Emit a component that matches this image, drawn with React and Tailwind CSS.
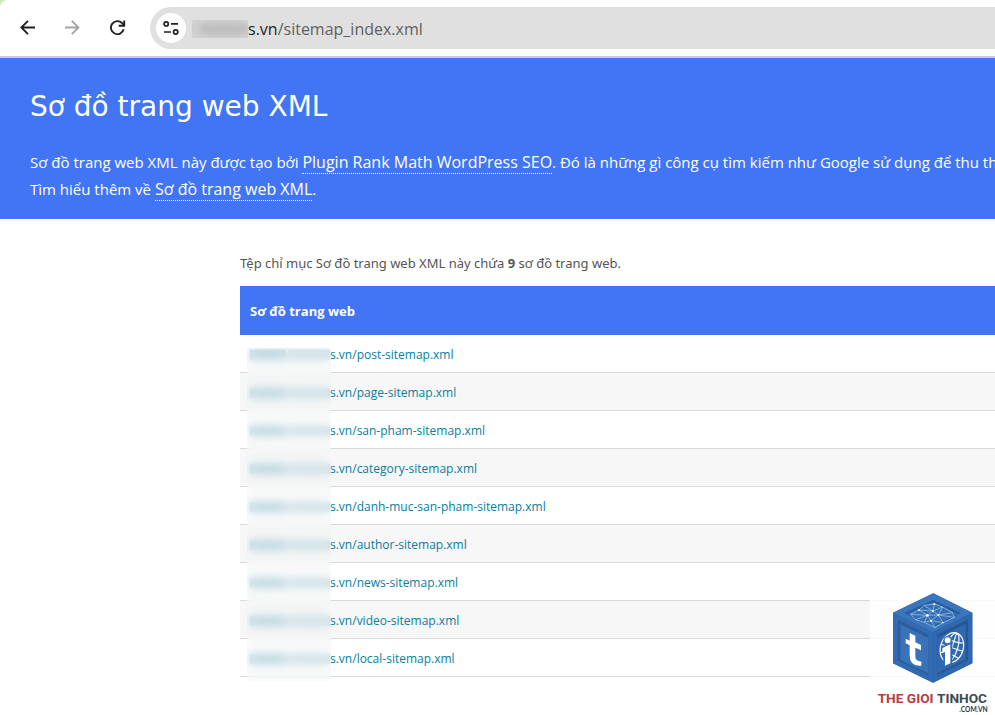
import React from 'react'

const sitemaps = [
  'post-sitemap.xml',
  'page-sitemap.xml',
  'san-pham-sitemap.xml',
  'category-sitemap.xml',
  'danh-muc-san-pham-sitemap.xml',
  'author-sitemap.xml',
  'news-sitemap.xml',
  'video-sitemap.xml',
  'local-sitemap.xml'
]

const BackIcon = () => (
  <svg width="16" height="16" viewBox="0 0 16 16" fill="none" stroke="currentColor" strokeWidth="1.8">
    <path d="M15 7.5H1.8M8 0.8L1.3 7.5l6.7 6.7" />
  </svg>
)

const ForwardIcon = () => (
  <svg width="16" height="16" viewBox="0 0 16 16" fill="none" stroke="currentColor" strokeWidth="1.8">
    <path d="M0 7.5h13.2M6.8 0.8L13.5 7.5l-6.7 6.7" />
  </svg>
)

const ReloadIcon = () => (
  <svg width="16" height="16" viewBox="0 0 16 16" fill="none" stroke="currentColor" strokeWidth="1.9">
    <path d="M13.7 9.3A6.5 6.5 0 1 1 12.1 3.1L14.1 5.1" />
    <path d="M14.2 0.4V5.7H8.7" />
  </svg>
)

const SiteInfoIcon = () => (
  <svg width="16" height="16" viewBox="0 0 16 16" fill="none" stroke="currentColor" strokeWidth="1.7">
    <circle cx="3.2" cy="3.9" r="2.1" />
    <path d="M8 3.9h7M1 12h7" />
    <circle cx="12.7" cy="12" r="2.1" />
  </svg>
)

const BrowserBar = () => (
  <div className="bg-[#cdeac0]">
    <div className="flex h-[58px] items-center rounded-tl-lg border-b-2 border-[#c9cbcf] bg-white pl-5">
      <div className="flex items-center gap-[29px] text-[#1f1f1f]">
        <button type="button" aria-label="Back" className="flex h-8 w-4 items-center justify-center">
          <BackIcon />
        </button>
        <button type="button" aria-label="Forward" className="flex h-8 w-4 items-center justify-center text-[#a3a3a3]">
          <ForwardIcon />
        </button>
        <button type="button" aria-label="Reload" className="flex h-8 w-4 items-center justify-center">
          <ReloadIcon />
        </button>
      </div>
      <div className="ml-6 flex h-[42px] flex-1 items-center rounded-l-full bg-[#e0e0e0] pl-1.5">
        <button
          type="button"
          aria-label="Site information"
          className="flex size-[30px] items-center justify-center rounded-full bg-white text-[#1f1f1f]"
        >
          <SiteInfoIcon />
        </button>
        <div className="flex min-w-0 flex-1 items-center pt-0.5 pl-1.5">
          <span aria-hidden="true" className="flex h-[18px] w-[56px] items-center overflow-hidden bg-[#d2d2d2]">
            <span className="ml-2 h-2 w-full bg-[#b4b4b4] blur-[4px]" />
          </span>
          <label htmlFor="address" className="font-['Open_Sans',sans-serif] text-[16px] text-[#1f1f1f]">
            s.vn
          </label>
          <input
            id="address"
            type="text"
            defaultValue="/sitemap_index.xml"
            className="min-w-0 flex-1 bg-transparent font-['Open_Sans',sans-serif] text-[16px] text-[#5f6062] outline-none"
          />
        </div>
      </div>
    </div>
  </div>
)

const Header = () => (
  <header className="overflow-hidden bg-[#4275f4] px-[30px] pt-[29px] pb-4 text-white">
    <h1 className="font-['DejaVu_Sans',sans-serif] text-[28px] leading-10">Sơ đồ trang web XML</h1>
    <p className="mt-[22px] text-[15px] leading-[27px] whitespace-nowrap">
      Sơ đồ trang web XML này được tạo bởi{' '}
      <a href="#rank-math" className="border-b border-dotted border-white text-[16px]">
        Plugin Rank Math WordPress SEO
      </a>
      . Đó là những gì công cụ tìm kiếm như Google sử dụng để thu thập
      <br />
      Tìm hiểu thêm về{' '}
      <a href="#sitemap" className="border-b border-dotted border-white text-[16px]">
        Sơ đồ trang web XML
      </a>
      .
    </p>
  </header>
)

const SitemapTable = () => (
  <div className="relative">
    <table className="w-full border-separate border-spacing-0 text-left">
      <thead>
        <tr className="h-[49px] bg-[#4275f4] text-[13px] text-white">
          <th className="px-2.5 pt-0.5 font-bold">Sơ đồ trang web</th>
        </tr>
      </thead>
      <tbody>
        {sitemaps.map((name) => (
          <tr key={name} className="h-[38px] even:bg-[#f7f7f7]">
            <td className="border-b border-[#dadada] px-2.5 pt-0.5 text-[12px]">
              <a href={`#${name}`} className="flex items-center text-[#05809e]">
                <span aria-hidden="true" className="flex h-2.5 w-20 gap-0.5">
                  <span className="w-9 bg-[#94c2d0]" />
                  <span className="flex-1 bg-[#b3d2dc]" />
                </span>
                s.vn/{name}
              </a>
            </td>
          </tr>
        ))}
      </tbody>
    </table>
    {/* frosted strip over the start of every address */}
    <div className="absolute top-[62px] -bottom-1 left-[7px] w-[84px] bg-[#f3f5f6]/40 backdrop-blur-[5px]" />
  </div>
)

const Logo = () => (
  <div className="absolute right-0 bottom-0 bg-white/85">
    <svg width="125" height="124" viewBox="15 33 375 372" role="img" aria-label="The Gioi Tin Hoc">
      <path d="M205 40L322 98V250L205 308L84 250V98Z" fill="#2b62a8" />
      <path d="M205 40L322 98L203 156L84 98Z" fill="#3b76bc" />
      <path d="M84 98L203 156V308L84 250Z" fill="#336bb1" />
      <path d="M203 156L322 98V250L203 308Z" fill="#2f68ae" />
      <path d="M205 60L288 99L204 141L118 99Z" fill="#265c9f" />
      <path d="M205 67L278 101L204 139L128 101Z" fill="#346fb4" />
      <path d="M98 119L190 164V286L98 241Z" fill="#2a5e9f" />
      <path d="M106 133L190 173V280L106 240Z" fill="#3972b8" />
      <path d="M217 164L309 118V241L217 286Z" fill="#265794" />
      <path d="M217 174L302 132V238L217 280Z" fill="#2f69b0" />
      <g stroke="#d5e6f8" strokeWidth="1.5" fill="none">
        <path d="M137 103L162 90L177 76L208 72L233 81L262 98L268 112L234 128L210 143L178 127L152 119Z" />
        <path d="M162 90L204 93L233 81M177 76L204 93L187 106L137 103M162 90L187 106L198 122L234 128M187 106L220 105L204 93M220 105L262 98M198 122L220 105L268 112M187 106L178 127L198 122L210 143M208 72L204 93M152 119L187 106M233 81L220 105L234 128" />
      </g>
      <g fill="#fff">
        <circle cx="204" cy="93" r="3" />
        <circle cx="187" cy="106" r="4" />
        <circle cx="220" cy="105" r="3" />
        <circle cx="198" cy="122" r="3" />
        <circle cx="208" cy="72" r="3" />
        <circle cx="162" cy="90" r="3" />
        <circle cx="234" cy="128" r="2" />
      </g>
      {/* t mark */}
      <path
        d="M134 159L151 167V187L168 195V211L151 203V231Q151 242 169 245V257Q134 260 134 226V196L122 190V176L134 182Z"
        fill="#fff"
      />
      {/* globe with i */}
      <g stroke="#fff" strokeWidth="3.5" fill="none" transform="rotate(18 260 205)">
        <ellipse cx="260" cy="203" rx="34" ry="46" />
        <ellipse cx="260" cy="203" rx="17" ry="46" />
        <path d="M260 157V249M226 203H294M232 180Q260 187 288 180M232 227Q260 219 288 227" />
      </g>
      <path d="M233 199L262 185V252L236 263Z" fill="#2f69b0" />
      <path d="M232 204L256 193V250L240 257V216L232 219Z" fill="#fff" />
      <ellipse cx="248" cy="181" rx="11" ry="11" fill="#fff" stroke="#2f69b0" strokeWidth="4" />
      <text x="38" y="370" fontFamily="Roboto, sans-serif" fontWeight="700" fontSize="41" fill="#b63d42">
        THE GIOI <tspan fill="#3d4a50">TINHOC</tspan>
      </text>
      <text x="368" y="397" textAnchor="end" fontFamily="Lato, sans-serif" fontWeight="700" fontSize="20" fill="#33383b">
        .COM.VN
      </text>
    </svg>
  </div>
)

const App = () => (
  <div className="relative min-h-screen overflow-hidden bg-white font-['Open_Sans',sans-serif]">
    <BrowserBar />
    <Header />
    <main className="ml-60 pt-[34px]">
      <p className="mb-[13px] font-['Noto_Sans',sans-serif] text-[13px] leading-5 text-[#555]">
        Tệp chỉ mục Sơ đồ trang web XML này chứa <strong>9</strong> sơ đồ trang web.
      </p>
      <SitemapTable />
    </main>
    <Logo />
  </div>
)

export default App
